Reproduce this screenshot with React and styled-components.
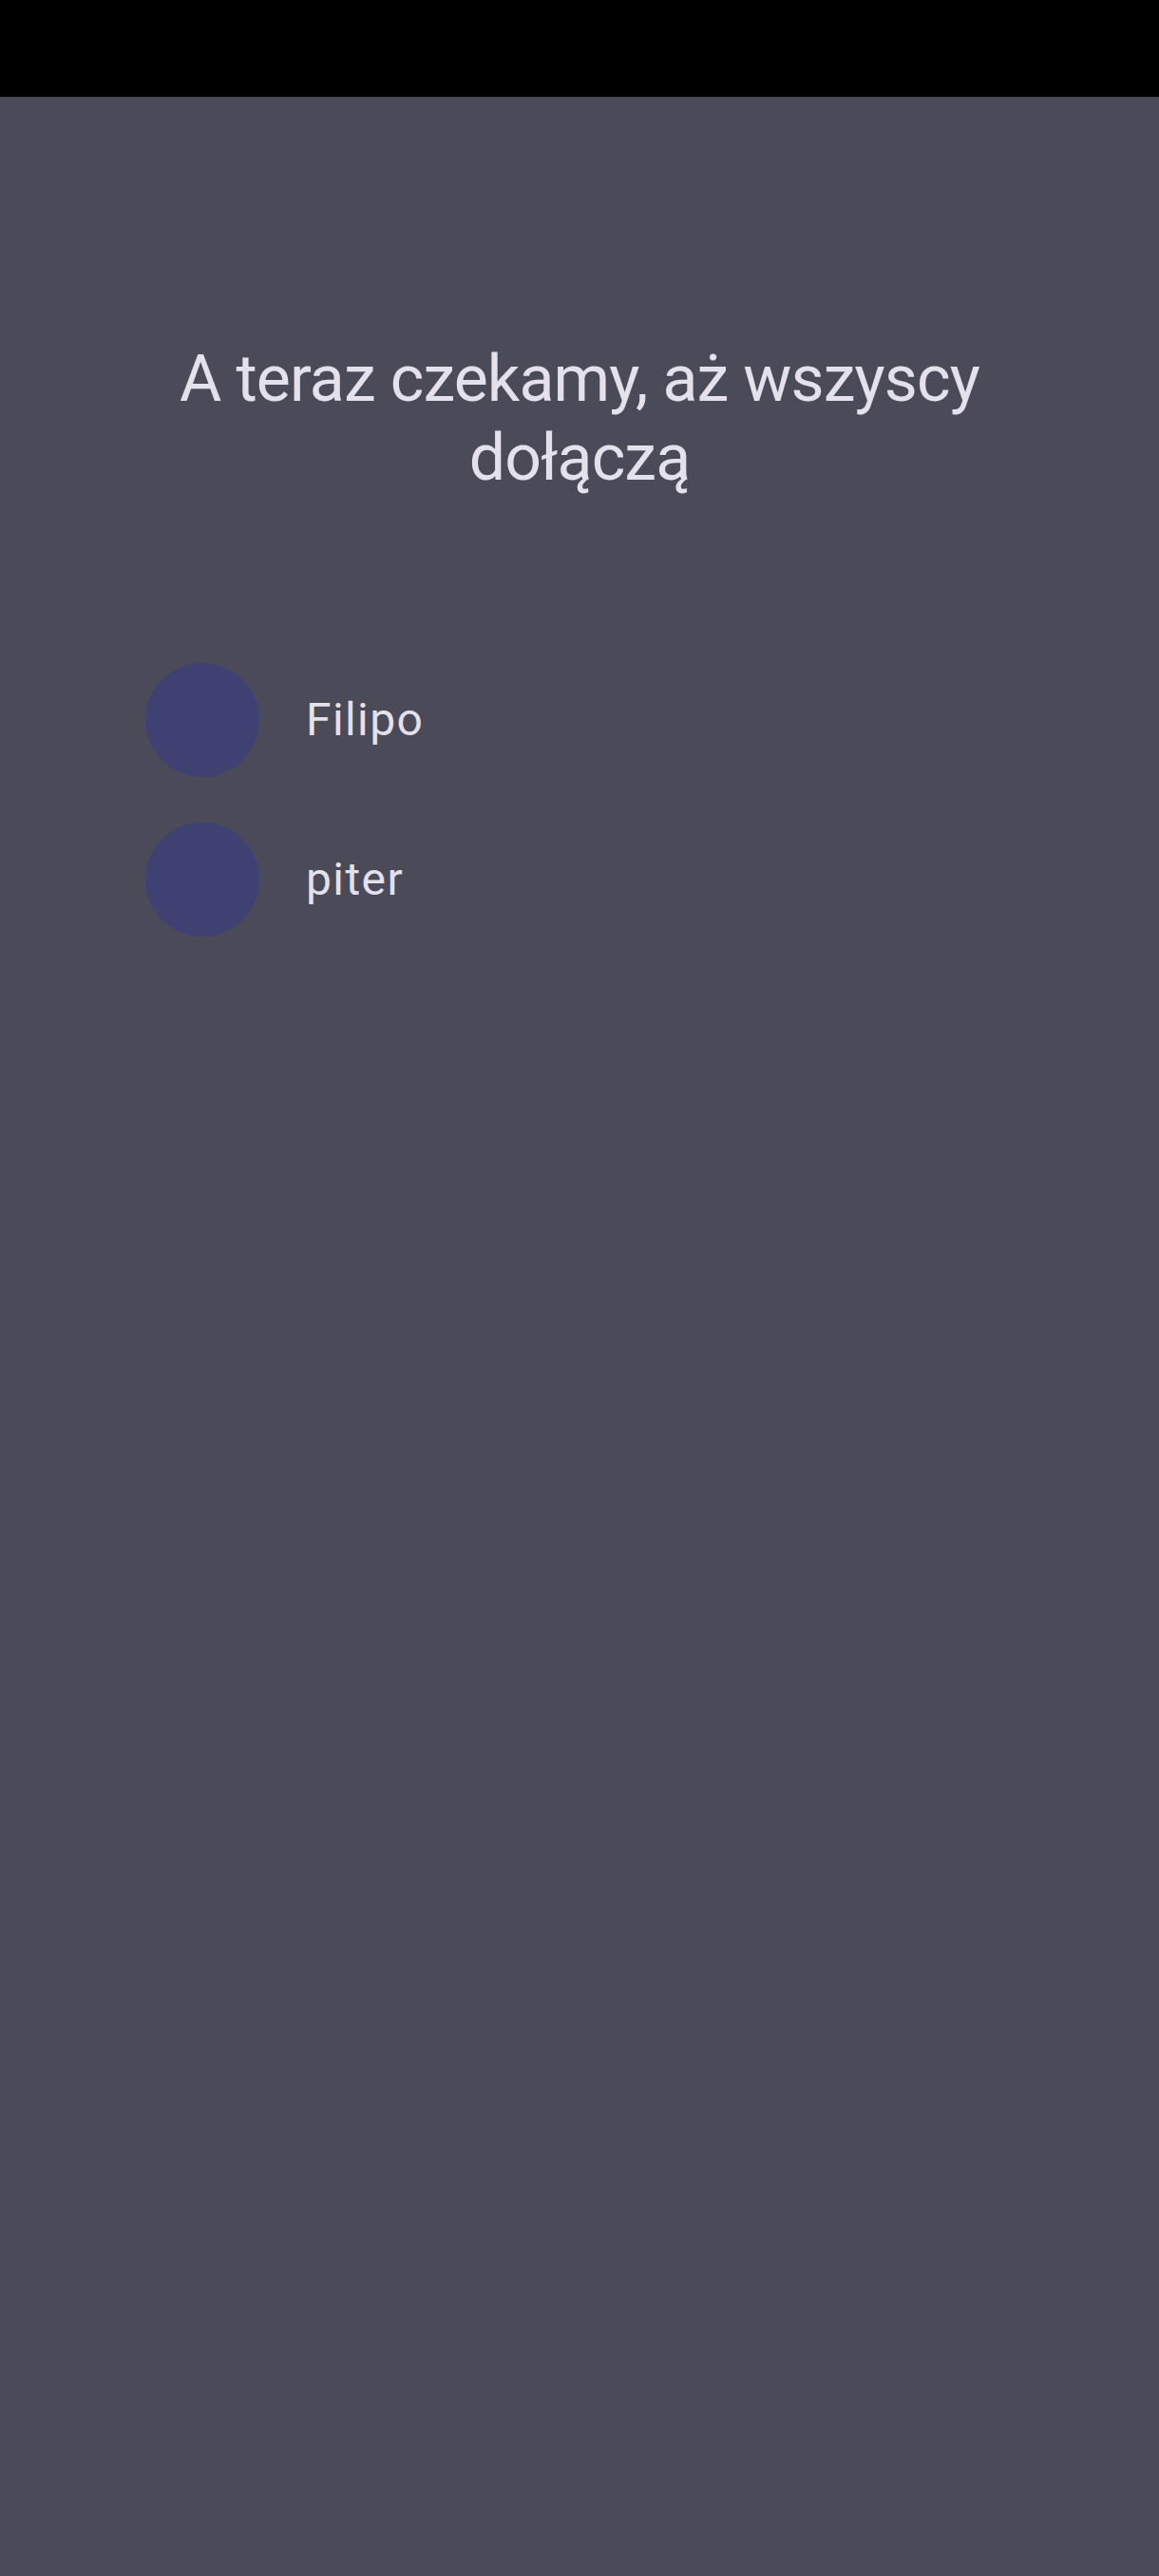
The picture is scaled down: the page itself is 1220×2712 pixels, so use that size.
import React from "react"
import styled, { createGlobalStyle } from "styled-components"

const GlobalStyle = createGlobalStyle`
    html, body {
        margin: 0;
        padding: 0;
        background: #4b4a58;
    }
    #root {
        min-height: 100vh;
    }
`

const Screen = styled.div`
    display: flex;
    flex-direction: column;
    min-height: 100vh;
    background: #4b4a58;
    font-family: Roboto, "Noto Sans", sans-serif;
    color: #e4e1ec;
`

const StatusBar = styled.div`
    height: 102px;
    background: #000;
    flex-shrink: 0;
`

const Content = styled.div`
    display: flex;
    flex-direction: column;
    padding: 256px 150px 0 153px;
`

const Title = styled.h1`
    margin: 0 0 174px;
    font-size: 68px;
    font-weight: 400;
    letter-spacing: -0.9px;
    line-height: 83px;
    text-align: center;
    padding-right: 3px;
`

const PlayerList = styled.ul`
    list-style: none;
    margin: 0;
    padding: 0;
    display: flex;
    flex-direction: column;
    gap: 48px;
`

const PlayerRow = styled.li`
    display: flex;
    align-items: center;
    gap: 49px;
`

const Avatar = styled.div`
    width: 120px;
    height: 120px;
    border-radius: 50%;
    background: ${props => props.color || "#3f4173"};
    flex-shrink: 0;
`

const Name = styled.span`
    font-size: 48px;
    letter-spacing: 1.4px;
    line-height: 56px;
`

const players = ["Filipo", "piter"]

export default function App() {
    return (
        <Screen>
            <GlobalStyle />
            <StatusBar />
            <Content>
                <Title>A teraz czekamy, aż wszyscy dołączą</Title>
                <PlayerList>
                    {players.map(name => (
                        <PlayerRow key={name}>
                            <Avatar />
                            <Name>{name}</Name>
                        </PlayerRow>
                    ))}
                </PlayerList>
            </Content>
        </Screen>
    )
}
